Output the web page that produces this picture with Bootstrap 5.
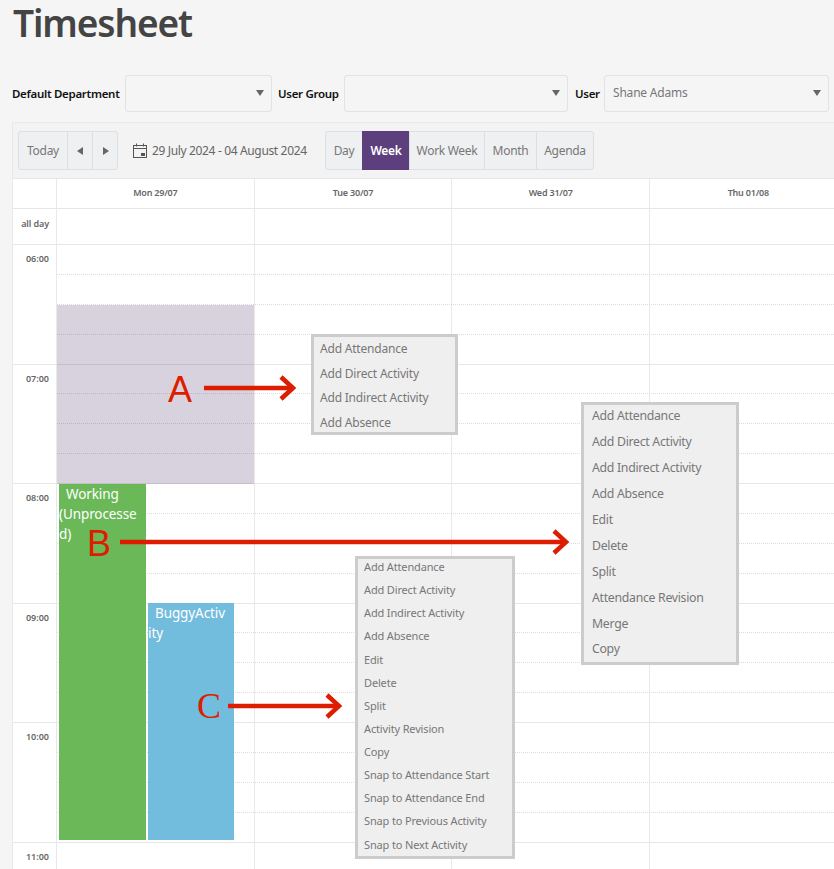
<!DOCTYPE html>
<html lang="en"><head><meta charset="utf-8"><title>Timesheet</title>
<link href="https://cdn.jsdelivr.net/npm/bootstrap@5.3.0/dist/css/bootstrap.min.css" rel="stylesheet">
<style>
html,body{height:869px;overflow:hidden}
body{background:#f5f5f5;font-family:"Noto Sans",sans-serif;font-size:12px;color:#777;position:relative;width:834px}
.ttl{font-size:37px;font-weight:600;color:#444;line-height:46px;margin:0 0 29px 13px;letter-spacing:-1.1px}
.filters{height:37px;margin-left:12px}
.filters label{font-weight:600;color:#111;font-size:11.5px;letter-spacing:-.3px;white-space:nowrap;margin:0}
.l1{width:113px}.l2{width:66px;margin-left:6px!important}.l3{width:29px;margin-left:7px!important}
.sel{height:37px;border:1px solid #e2e2e2;border-radius:3px;background:#f5f5f5;padding:0 7px 2px 8px;color:#777;letter-spacing:-.2px}
.sel::after{content:"";margin-left:auto;border:4.5px solid transparent;border-top:6px solid #666;border-bottom:0}
.s1{width:147px}.s2{width:224px}.s3{width:225px}
.cal{margin:10px 0 0 12px;width:822px;overflow:hidden;border:1px solid #e9e9e9;border-right:0;border-bottom:0}
.tbar{height:56px;padding:8px 0 0 5px;background:#f3f3f3;border-bottom:1px solid #e6e6e6}
.tbar .btn{height:39px;font-size:12px;color:#777;background:#eff0f2;border:1px solid #dcdfe3;border-radius:3px;padding:0;--bs-btn-hover-bg:#eff0f2;letter-spacing:-.3px;flex:none}
.tbar .btn.on{background:#5c3f7c;border-color:#5c3f7c;color:#fff;font-weight:600}
.tri{width:26px}.w-td{width:50px}.w-dy{width:38px}.w-wk{width:48px}.w-ww{width:76px}.w-mo{width:53px}.w-ag{width:58px}
.range{margin-left:15px;width:192px;height:39px;letter-spacing:-.35px;white-space:nowrap;color:#666}
.hd,.ad,.cl{display:flex;background:#fff}
.gut{width:44px;flex:none;border-right:1px solid #e9e9e9}
.hd{height:30px;border-bottom:1px solid #e6e6e6}
.hd .day{width:197.67px;flex:none;border-right:1px solid #e9e9e9;text-align:center;font-size:9px;font-weight:600;line-height:28px;color:#666;letter-spacing:-.2px}
.ad{height:35px}
.ad .gut{font-size:9px;font-weight:600;line-height:29px;text-align:right;padding-right:7px;color:#666;white-space:nowrap;letter-spacing:-.1px}
.cells{flex:1;background:repeating-linear-gradient(90deg,transparent 0,transparent 196.67px,#e9e9e9 196.67px,#e9e9e9 197.67px)}
.stack{position:relative}
.cl{height:29.875px;overflow:hidden}
.cl .cells{border-top:1px dotted #ddd}
.cl.h .cells,.cl.h .gut{border-top:1px solid #e6e6e6}
.cl .gut{font-size:9px;font-weight:600;text-align:right;padding:7px 7px 0 0;line-height:14px;color:#666}
.off{position:absolute;left:44px;width:197px;top:61px;height:179px;background:rgba(60,30,90,.2)}
.ev{position:absolute;color:#fff;font-size:13.5px;line-height:20px;white-space:nowrap;overflow:hidden;letter-spacing:-.1px}
.ev span{padding-left:7px}
.e1{left:46px;width:87px;top:240px;height:356px;background:#6ab858}
.e2{left:135px;width:86px;top:359px;height:237px;background:#72bcdd}
.cmenu{position:absolute;background:#efefef;border:3px solid #ccc;margin:0;color:#777;display:flex;flex-direction:column;justify-content:space-between;letter-spacing:-.2px;white-space:nowrap}
.cm-a{left:311px;top:334px;width:147px;height:101px;padding:5px 0 2px 6px;line-height:14px}
.cm-b{left:581px;top:402px;width:158px;height:263px;padding:2px 0 3px 8px;font-size:12.3px;letter-spacing:-.3px}
.cm-c{left:355px;top:556px;width:160px;height:303px;padding:0 0 3px 6px;font-size:11px;letter-spacing:-.15px}
.ltr{position:absolute;color:#dd1c00;font-size:36px;line-height:36px;font-family:"Liberation Sans",sans-serif}
.lc{font-family:"Liberation Serif",serif}
.arw{position:absolute;left:0;top:0;pointer-events:none}
</style></head><body>
<h1 class="ttl">Timesheet</h1>
<div class="filters d-flex align-items-center">
 <label class="l1">Default Department</label><div class="sel s1 d-flex align-items-center"></div>
 <label class="l2">User Group</label><div class="sel s2 d-flex align-items-center"></div>
 <label class="l3">User</label><div class="sel s3 d-flex align-items-center">Shane Adams</div>
</div>
<div class="cal">
 <div class="tbar d-flex align-items-start">
  <div class="btn-group"><button class="btn w-td">Today</button><button class="btn tri" aria-label="Previous"><svg width="7" height="8" viewBox="0 0 7 8"><path d="M6 0v8L0 4z" fill="#666"/></svg></button><button class="btn tri" aria-label="Next"><svg width="7" height="8" viewBox="0 0 7 8"><path d="M1 0v8l6-4z" fill="#666"/></svg></button></div>
  <div class="range d-flex align-items-center gap-1">
   <svg width="15" height="15" viewBox="0 0 15 15" fill="none" stroke="#555"><rect x=".5" y="2.5" width="13" height="12"/><path d="M.5 5.5h13M3.5 .5v3M10.5 .5v3"/><rect x="8" y="10" width="4" height="3" fill="#555" stroke="none"/></svg>
   <span>29 July 2024 - 04 August 2024</span></div>
  <div class="btn-group"><button class="btn w-dy">Day</button><button class="btn on w-wk">Week</button><button class="btn w-ww">Work Week</button><button class="btn w-mo">Month</button><button class="btn w-ag">Agenda</button></div>
 </div>
 <div class="hd"><div class="gut"></div><div class="day">Mon 29/07</div><div class="day">Tue 30/07</div><div class="day">Wed 31/07</div><div class="day">Thu 01/08</div></div>
 <div class="ad"><div class="gut">all day</div><div class="cells"></div></div>
 <div class="stack">
  <div class="cl h"><div class="gut">06:00</div><div class="cells"></div></div><div class="cl"><div class="gut"></div><div class="cells"></div></div><div class="cl"><div class="gut"></div><div class="cells"></div></div><div class="cl"><div class="gut"></div><div class="cells"></div></div>
  <div class="cl h"><div class="gut">07:00</div><div class="cells"></div></div><div class="cl"><div class="gut"></div><div class="cells"></div></div><div class="cl"><div class="gut"></div><div class="cells"></div></div><div class="cl"><div class="gut"></div><div class="cells"></div></div>
  <div class="cl h"><div class="gut">08:00</div><div class="cells"></div></div><div class="cl"><div class="gut"></div><div class="cells"></div></div><div class="cl"><div class="gut"></div><div class="cells"></div></div><div class="cl"><div class="gut"></div><div class="cells"></div></div>
  <div class="cl h"><div class="gut">09:00</div><div class="cells"></div></div><div class="cl"><div class="gut"></div><div class="cells"></div></div><div class="cl"><div class="gut"></div><div class="cells"></div></div><div class="cl"><div class="gut"></div><div class="cells"></div></div>
  <div class="cl h"><div class="gut">10:00</div><div class="cells"></div></div><div class="cl"><div class="gut"></div><div class="cells"></div></div><div class="cl"><div class="gut"></div><div class="cells"></div></div><div class="cl"><div class="gut"></div><div class="cells"></div></div>
  <div class="cl h"><div class="gut">11:00</div><div class="cells"></div></div>
  <div class="off"></div>
  <div class="ev e1"><span>Working</span><br>(Unprocesse<br>d)</div>
  <div class="ev e2"><span>BuggyActiv</span><br>ity</div>
 </div>
</div>
<svg class="arw" width="834" height="869" fill="none" stroke="#dd1c00" stroke-width="4.5"><path d="M204 388h87M120 542h444M228 706h109"/><path d="M281 377l12 11-12 11M554 531l12 11-12 11M327 695l12 11-12 11"/></svg>
<div class="ltr" style="left:168px;top:372px">A</div>
<div class="ltr" style="left:87px;top:526px">B</div>
<div class="ltr lc" style="left:197px;top:688px">C</div>
<ul class="cmenu cm-a list-unstyled"><li>Add Attendance</li><li>Add Direct Activity</li><li>Add Indirect Activity</li><li>Add Absence</li></ul>
<ul class="cmenu cm-b list-unstyled"><li>Add Attendance</li><li>Add Direct Activity</li><li>Add Indirect Activity</li><li>Add Absence</li><li>Edit</li><li>Delete</li><li>Split</li><li>Attendance Revision</li><li>Merge</li><li>Copy</li></ul>
<ul class="cmenu cm-c list-unstyled"><li>Add Attendance</li><li>Add Direct Activity</li><li>Add Indirect Activity</li><li>Add Absence</li><li>Edit</li><li>Delete</li><li>Split</li><li>Activity Revision</li><li>Copy</li><li>Snap to Attendance Start</li><li>Snap to Attendance End</li><li>Snap to Previous Activity</li><li>Snap to Next Activity</li></ul>
<script src="https://cdn.jsdelivr.net/npm/bootstrap@5.3.0/dist/js/bootstrap.bundle.min.js"></script>
</body></html>
